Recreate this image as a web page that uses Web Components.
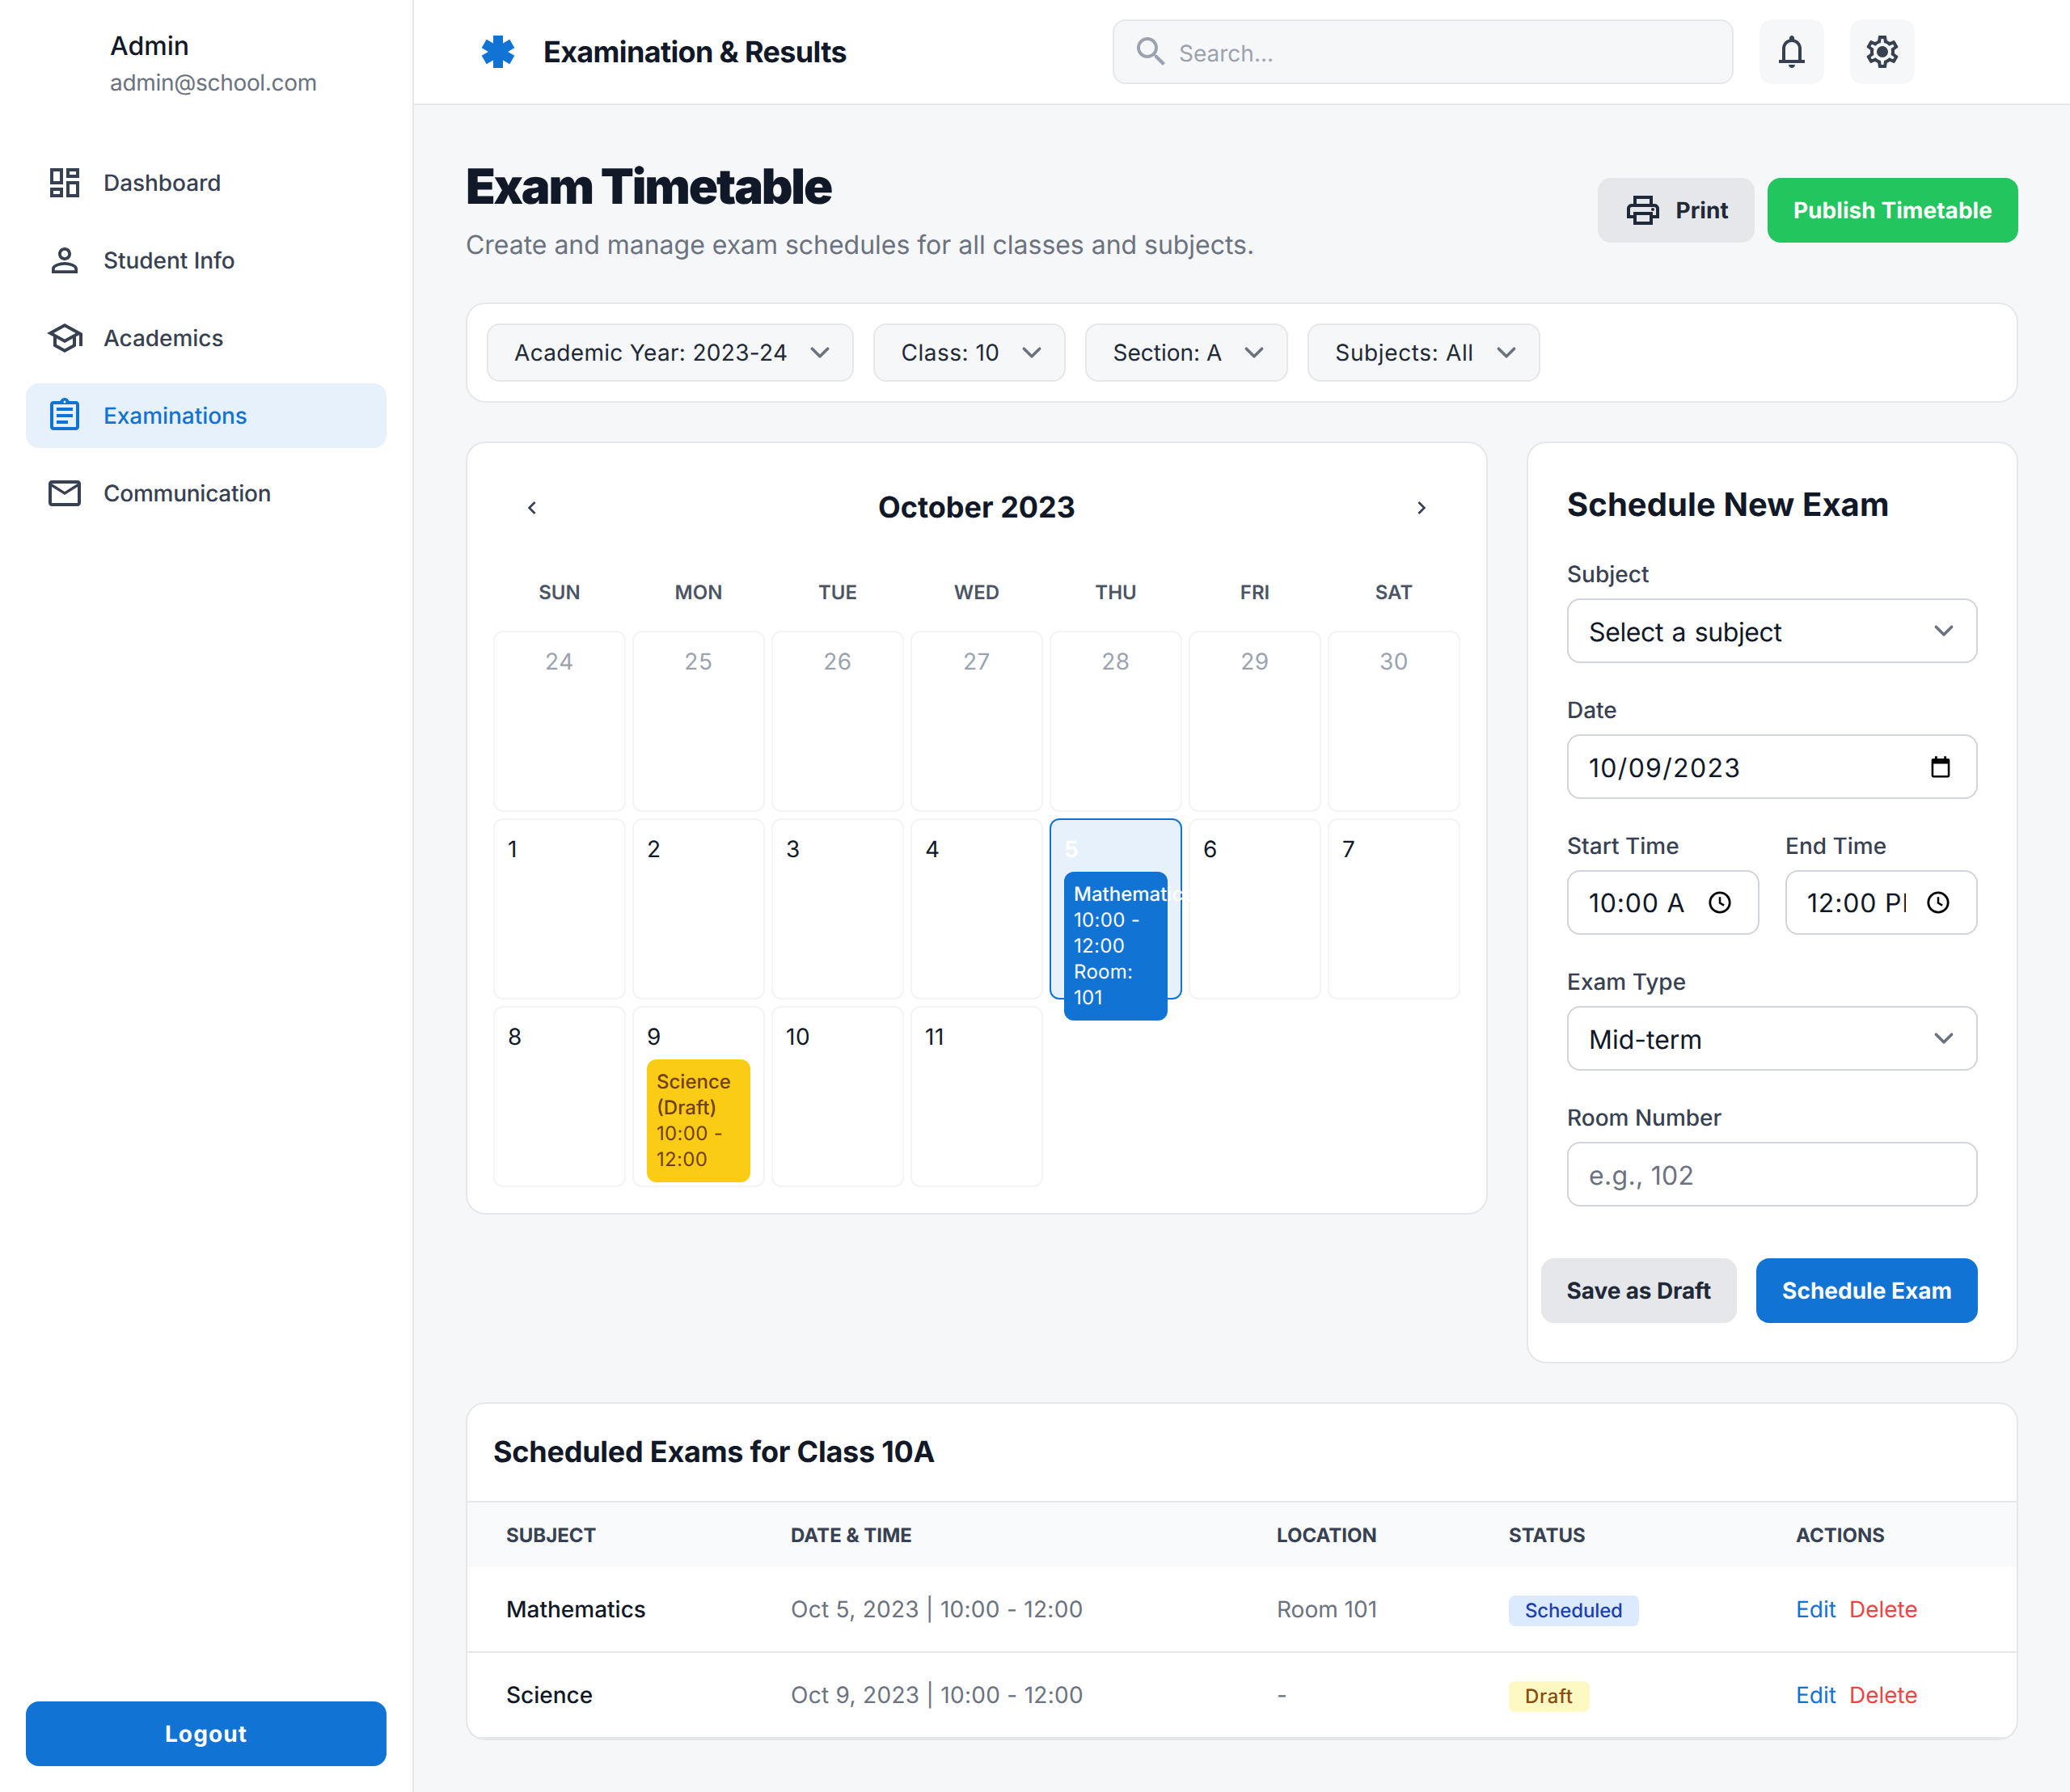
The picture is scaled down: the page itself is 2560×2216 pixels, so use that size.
<!DOCTYPE html>
<html lang="en">
<head>
<meta charset="utf-8">
<title>Exam Timetable</title>
<style>
    html, body { margin: 0; padding: 0; }
    body { background: #f6f7f8; font-family: Inter, "Noto Sans", sans-serif; color: #111827; text-rendering: geometricPrecision; }
</style>
</head>
<body>
<exam-app>
    <app-sidebar slot="sidebar" name="Admin" email="admin@school.com">
        <nav-item icon="dashboard">Dashboard</nav-item>
        <nav-item icon="person">Student Info</nav-item>
        <nav-item icon="school">Academics</nav-item>
        <nav-item icon="assignment" active>Examinations</nav-item>
        <nav-item icon="mail" style="letter-spacing: -0.25px">Communication</nav-item>
        <ui-button slot="footer" kind="primary" wide style="letter-spacing: 1.1px">Logout</ui-button>
    </app-sidebar>

    <app-header slot="header" heading="Examination &amp; Results"></app-header>

    <page-head heading="Exam Timetable" sub="Create and manage exam schedules for all classes and subjects.">
        <ui-button kind="muted" icon="print" style="letter-spacing: 0.1px">Print</ui-button>
        <ui-button kind="success" style="letter-spacing: 0.05px">Publish Timetable</ui-button>
    </page-head>

    <filter-bar>
        <filter-select style="letter-spacing: 0.32px">Academic Year: 2023-24</filter-select>
        <filter-select style="letter-spacing: 0.5px">Class: 10</filter-select>
        <filter-select>Section: A</filter-select>
        <filter-select style="letter-spacing: 0.63px">Subjects: All</filter-select>
    </filter-bar>

    <split-row>
        <month-calendar heading="October 2023">
            <cal-cell day="24" muted></cal-cell>
            <cal-cell day="25" muted></cal-cell>
            <cal-cell day="26" muted></cal-cell>
            <cal-cell day="27" muted></cal-cell>
            <cal-cell day="28" muted></cal-cell>
            <cal-cell day="29" muted></cal-cell>
            <cal-cell day="30" muted></cal-cell>
            <cal-cell day="1"></cal-cell>
            <cal-cell day="2"></cal-cell>
            <cal-cell day="3"></cal-cell>
            <cal-cell day="4"></cal-cell>
            <cal-cell day="5" selected>
                <cal-event subject="Mathematics">10:00 - 12:00<br>Room: 101</cal-event>
            </cal-cell>
            <cal-cell day="6"></cal-cell>
            <cal-cell day="7"></cal-cell>
            <cal-cell day="8"></cal-cell>
            <cal-cell day="9">
                <cal-event subject="Science (Draft)" draft>10:00 - 12:00</cal-event>
            </cal-cell>
            <cal-cell day="10"></cal-cell>
            <cal-cell day="11"></cal-cell>
        </month-calendar>

        <exam-form heading="Schedule New Exam">
            <form-field label="Subject"><form-control trail="chevron" style="word-spacing: 2px; letter-spacing: -0.4px">Select a subject</form-control></form-field>
            <form-field label="Date"><form-control trail="calendar" style="letter-spacing: 1.3px">10/09/2023</form-control></form-field>
            <field-pair>
                <form-field label="Start Time"><form-control trail="clock" clip style="letter-spacing: 0.8px">10:00 AM</form-control></form-field>
                <form-field label="End Time"><form-control trail="clock" clip style="letter-spacing: 0.8px">12:00 PM</form-control></form-field>
            </field-pair>
            <form-field label="Exam Type"><form-control trail="chevron">Mid-term</form-control></form-field>
            <form-field label="Room Number"><form-control placeholder style="letter-spacing: 0.3px">e.g., 102</form-control></form-field>
            <ui-button slot="actions" kind="muted" style="letter-spacing: -0.12px">Save as Draft</ui-button>
            <ui-button slot="actions" kind="primary">Schedule Exam</ui-button>
        </exam-form>
    </split-row>

    <exams-table heading="Scheduled Exams for Class 10A"></exams-table>
</exam-app>

<script>
const ICONS = {
    dashboard: `<path d="M19 5v2h-4V5h4M9 5v6H5V5h4m10 8v6h-4v-6h4M9 17v2H5v-2h4M21 3h-8v6h8V3zM11 3H3v10h8V3zm10 8h-8v10h8V11zm-10 4H3v6h8v-6z"/>`,
    person: `<path d="M12 5.9c1.16 0 2.1.94 2.1 2.1s-.94 2.1-2.1 2.1S9.9 9.16 9.9 8s.94-2.1 2.1-2.1m0 9c2.97 0 6.1 1.46 6.1 2.1v1.1H5.9V17c0-.64 3.13-2.1 6.1-2.1M12 4C9.79 4 8 5.79 8 8s1.79 4 4 4 4-1.79 4-4-1.79-4-4-4zm0 9c-2.67 0-8 1.34-8 4v3h16v-3c0-2.66-5.33-4-8-4z"/>`,
    school: `<path d="M12 3L1 9l4 2.18v6L12 21l7-3.82v-6l2-1.09V17h2V9L12 3zm6.82 6L12 12.72 5.18 9 12 5.28 18.82 9zM17 15.99l-5 2.73-5-2.73v-3.72L12 15l5-2.73v3.72z"/>`,
    assignment: `<path fill-rule="evenodd" d="M19 3h-4.18C14.4 1.84 13.3 1 12 1s-2.4.84-2.82 2H5c-1.1 0-2 .9-2 2v14c0 1.1.9 2 2 2h14c1.1 0 2-.9 2-2V5c0-1.1-.9-2-2-2zm-7-.25c.41 0 .75.34.75.75s-.34.75-.75.75-.75-.34-.75-.75.34-.75.75-.75zM19 19H5V5h14v14zM7 15h7v2H7zm0-4h10v2H7zm0-4h10v2H7z"/>`,
    mail: `<path d="M22 6c0-1.1-.9-2-2-2H4c-1.1 0-2 .9-2 2v12c0 1.1.9 2 2 2h16c1.1 0 2-.9 2-2V6zm-2 0l-8 5-8-5h16zm0 12H4V8l8 5 8-5v10z"/>`,
    star: `<rect x="9" y="2" width="6" height="20"/><rect x="9" y="2" width="6" height="20" transform="rotate(60 12 12)"/><rect x="9" y="2" width="6" height="20" transform="rotate(-60 12 12)"/>`,
    search: `<path d="M15.5 14h-.79l-.28-.27C15.41 12.59 16 11.11 16 9.5 16 5.91 13.09 3 9.5 3S3 5.91 3 9.5 5.91 16 9.5 16c1.61 0 3.09-.59 4.23-1.57l.27.28v.79l5 4.99L20.49 19l-4.99-5zm-6 0C7.01 14 5 11.99 5 9.5S7.01 5 9.5 5 14 7.01 14 9.5 11.99 14 9.5 14z"/>`,
    bell: `<path d="M4 19v-2h2v-7c0-1.38.42-2.61 1.25-3.68S9.17 4.56 10.5 4.2v-.7c0-.42.15-.77.44-1.06S11.58 2 12 2s.77.15 1.06.44.44.65.44 1.06v.7c1.33.36 2.42 1.05 3.25 2.12S18 8.62 18 10v7h2v2H4zm8 3c-.55 0-1.02-.2-1.41-.59S10 20.55 10 20h4c0 .55-.2 1.02-.59 1.41S12.55 22 12 22zM8 17h8v-7c0-1.1-.39-2.04-1.18-2.83S13.1 6 12 6s-2.04.39-2.82 1.18S8 8.9 8 10v7z"/>`,
    gear: `<path d="M19.43 12.98c.04-.32.07-.64.07-.98 0-.34-.03-.66-.07-.98l2.11-1.65c.19-.15.24-.42.12-.64l-2-3.46c-.09-.16-.26-.25-.44-.25-.06 0-.12.01-.17.03l-2.49 1c-.52-.4-1.08-.73-1.69-.98l-.38-2.65C14.46 2.18 14.25 2 14 2h-4c-.25 0-.46.18-.49.42l-.38 2.65c-.61.25-1.17.59-1.69.98l-2.49-1c-.06-.02-.12-.03-.18-.03-.17 0-.34.09-.43.25l-2 3.46c-.13.22-.07.49.12.64l2.11 1.65c-.04.32-.07.65-.07.98 0 .33.03.66.07.98l-2.11 1.65c-.19.15-.24.42-.12.64l2 3.46c.09.16.26.25.44.25.06 0 .12-.01.17-.03l2.49-1c.52.4 1.08.73 1.69.98l.38 2.65c.03.24.24.42.49.42h4c.25 0 .46-.18.49-.42l.38-2.65c.61-.25 1.17-.59 1.69-.98l2.49 1c.06.02.12.03.18.03.17 0 .34-.09.43-.25l2-3.46c.12-.22.07-.49-.12-.64l-2.11-1.65zm-1.98-1.71c.04.31.05.52.05.73 0 .21-.02.43-.05.73l-.14 1.13.89.7 1.08.84-.7 1.21-1.27-.51-1.04-.42-.9.68c-.43.32-.84.56-1.25.73l-1.06.43-.16 1.13-.2 1.35h-1.4l-.19-1.35-.16-1.13-1.06-.43c-.43-.18-.83-.41-1.23-.71l-.91-.7-1.06.43-1.27.51-.7-1.21 1.08-.84.89-.7-.14-1.13c-.03-.31-.05-.54-.05-.74s.02-.43.05-.73l.14-1.13-.89-.7-1.08-.84.7-1.21 1.27.51 1.04.42.9-.68c.43-.32.84-.56 1.25-.73l1.06-.43.16-1.13.2-1.35h1.39l.19 1.35.16 1.13 1.06.43c.43.18.83.41 1.23.71l.91.7 1.06-.43 1.27-.51.7 1.21-1.07.85-.89.7.14 1.13z"/><circle cx="12" cy="12" r="3.5"/>`,
    print: `<path d="M19 8h-1V3H6v5H5c-1.66 0-3 1.34-3 3v6h4v4h12v-4h4v-6c0-1.66-1.34-3-3-3zM8 5h8v3H8V5zm8 12v2H8v-4h8v2zm2-2v-2H6v2H4v-4c0-.55.45-1 1-1h14c.55 0 1 .45 1 1v4h-2z"/><circle cx="18" cy="11.5" r="1"/>`,
    left: `<path d="M15.41 7.41L14 6l-6 6 6 6 1.41-1.41L10.83 12z"/>`,
    right: `<path d="M8.59 16.59L10 18l6-6-6-6-1.41 1.41L13.17 12z"/>`,
    chevron: `<path d="M7.2 9.6l4.8 4.8 4.8-4.8" fill="none" stroke="#6b7280" stroke-width="1.8" stroke-linecap="round" stroke-linejoin="round"/>`,
    calendar: `<path d="M7 3h2v2h6V3h2v2h1.5c.83 0 1.5.67 1.5 1.5V20c0 .83-.67 1.5-1.5 1.5h-13A1.5 1.5 0 0 1 4 20V6.5C4 5.67 4.67 5 5.5 5H7zM5.8 9.5v10.2h12.4V9.5z" fill-rule="evenodd"/>`,
    clock: `<circle cx="12" cy="12" r="8.6" fill="none" stroke="currentColor" stroke-width="2"/><path d="M12 7.2v5.2l3.6 2.2" fill="none" stroke="currentColor" stroke-width="1.8"/>`
}

class UiIcon extends HTMLElement {
    constructor() {
        super()
        const size = this.getAttribute("size") || 48
        this.attachShadow({ mode: "open" }).innerHTML = `
            <style>
                :host { display: block; flex: none; width: ${size}px; height: ${size}px; }
                svg { display: block; width: 100%; height: 100%; fill: currentColor; }
            </style>
            <svg viewBox="0 0 24 24">${ICONS[this.getAttribute("name")]}</svg>`
    }
}
customElements.define("ui-icon", UiIcon)

const appTemplate = document.createElement("template")
appTemplate.innerHTML = `
    <style>
        :host { display: flex; min-height: 2216px; }
        .right { flex: 1; min-width: 0; display: flex; flex-direction: column; }
        main { padding: 64px; display: flex; flex-direction: column; }
    </style>
    <slot name="sidebar"></slot>
    <div class="right">
        <slot name="header"></slot>
        <main><slot></slot></main>
    </div>
`
class ExamApp extends HTMLElement {
    constructor() {
        super()
        this.attachShadow({ mode: "open" }).appendChild(appTemplate.content.cloneNode(true))
    }
}
customElements.define("exam-app", ExamApp)

const sidebarTemplate = document.createElement("template")
sidebarTemplate.innerHTML = `
    <style>
        :host { display: flex; flex-direction: column; flex: none; box-sizing: border-box; width: 512px; padding: 33px 32px 32px; background: #fff; border-right: 2px solid #e5e7eb; }
        .profile { padding-left: 104px; margin-bottom: 64px; }
        .name { font-size: 32px; line-height: 48px; font-weight: 500; color: #111827; }
        .email { font-size: 28px; line-height: 40px; color: #6b7280; margin-top: 1px; letter-spacing: -0.3px; }
        nav { display: flex; flex-direction: column; gap: 16px; flex: 1; }
    </style>
    <div class="profile"><div class="name"></div><div class="email"></div></div>
    <nav><slot></slot></nav>
    <slot name="footer"></slot>
`
class AppSidebar extends HTMLElement {
    constructor() {
        super()
        this.attachShadow({ mode: "open" }).appendChild(sidebarTemplate.content.cloneNode(true))
        this.shadowRoot.querySelector(".name").innerText = this.getAttribute("name")
        this.shadowRoot.querySelector(".email").innerText = this.getAttribute("email")
    }
}
customElements.define("app-sidebar", AppSidebar)

class NavItem extends HTMLElement {
    constructor() {
        super()
        this.attachShadow({ mode: "open" }).innerHTML = `
            <style>
                :host { display: flex; align-items: center; gap: 24px; height: 80px; padding: 0 24px; border-radius: 16px; font-size: 28px; font-weight: 500; color: #374151; letter-spacing: -0.05px; }
                :host([active]) { background: #e7f1fb; color: #1173d4; }
            </style>
            <ui-icon name="${this.getAttribute("icon")}"></ui-icon>
            <slot></slot>`
    }
}
customElements.define("nav-item", NavItem)

class UiButton extends HTMLElement {
    constructor() {
        super()
        const icon = this.getAttribute("icon")
        this.attachShadow({ mode: "open" }).innerHTML = `
            <style>
                :host { display: inline-flex; flex: none; align-items: center; justify-content: center; gap: 16px; box-sizing: border-box; height: 80px; padding: 0 32px; border-radius: 16px; font-size: 28px; font-weight: 700; white-space: nowrap; }
                :host([kind=primary]) { background: #1173d4; color: #fff; }
                :host([kind=success]) { background: #22c55e; color: #fff; }
                :host([kind=muted]) { background: #e5e7eb; color: #1f2937; }
                :host([wide]) { display: flex; }
            </style>
            ${icon ? `<ui-icon name="${icon}"></ui-icon>` : ""}
            <slot></slot>`
    }
}
customElements.define("ui-button", UiButton)

const headerTemplate = document.createElement("template")
headerTemplate.innerHTML = `
    <style>
        :host { display: flex; align-items: center; justify-content: space-between; box-sizing: border-box; height: 130px; padding: 0 192px 0 80px; background: #fff; border-bottom: 2px solid #e5e7eb; }
        .brand { display: flex; align-items: center; gap: 32px; color: #1173d4; }
        h1 { margin: 0; font-size: 36px; line-height: 56px; font-weight: 700; letter-spacing: -0.66px; color: #111827; }
        .tools { display: flex; gap: 32px; }
        .search { display: flex; align-items: center; gap: 10px; box-sizing: border-box; width: 768px; height: 80px; padding: 0 22px; background: #f6f7f8; border: 2px solid #e5e7eb; border-radius: 16px; color: #9ca3af; font-size: 28px; }
        .search span { padding-top: 3px; }
        .square { display: flex; align-items: center; justify-content: center; width: 80px; height: 80px; border-radius: 16px; background: #f6f7f8; color: #374151; }
    </style>
    <div class="brand"><ui-icon name="star"></ui-icon><h1></h1></div>
    <div class="tools">
        <div class="search"><ui-icon name="search"></ui-icon><span>Search...</span></div>
        <div class="square"><ui-icon name="bell"></ui-icon></div>
        <div class="square"><ui-icon name="gear"></ui-icon></div>
    </div>
`
class AppHeader extends HTMLElement {
    constructor() {
        super()
        this.attachShadow({ mode: "open" }).appendChild(headerTemplate.content.cloneNode(true))
        this.shadowRoot.querySelector("h1").textContent = this.getAttribute("heading")
    }
}
customElements.define("app-header", AppHeader)

const pageHeadTemplate = document.createElement("template")
pageHeadTemplate.innerHTML = `
    <style>
        :host { display: flex; align-items: center; justify-content: space-between; margin-bottom: 48px; }
        h2 { margin: 0; padding-top: 2px; font-size: 60px; line-height: 70px; font-weight: 900; letter-spacing: -2.15px; color: #111827; }
        p { margin: 13px 0 -1px; font-size: 32px; line-height: 48px; letter-spacing: -0.03px; color: #6b7280; }
        .actions { display: flex; gap: 16px; }
    </style>
    <div><h2></h2><p></p></div>
    <div class="actions"><slot></slot></div>
`
class PageHead extends HTMLElement {
    constructor() {
        super()
        this.attachShadow({ mode: "open" }).appendChild(pageHeadTemplate.content.cloneNode(true))
        this.shadowRoot.querySelector("h2").textContent = this.getAttribute("heading")
        this.shadowRoot.querySelector("p").textContent = this.getAttribute("sub")
    }
}
customElements.define("page-head", PageHead)

class FilterBar extends HTMLElement {
    constructor() {
        super()
        this.attachShadow({ mode: "open" }).innerHTML = `
            <style>
                :host { display: flex; gap: 24px; padding: 24px; margin-bottom: 48px; background: #fff; border: 2px solid #e5e7eb; border-radius: 24px; }
            </style>
            <slot></slot>`
    }
}
customElements.define("filter-bar", FilterBar)

class FilterSelect extends HTMLElement {
    constructor() {
        super()
        this.attachShadow({ mode: "open" }).innerHTML = `
            <style>
                :host { display: flex; align-items: center; box-sizing: border-box; height: 72px; padding: 0 16px 0 32px; gap: 16px; background: #f6f7f8; border: 2px solid #e5e7eb; border-radius: 16px; font-size: 28px; color: #1f2937; white-space: nowrap; }
            </style>
            <slot></slot>
            <ui-icon name="chevron"></ui-icon>`
    }
}
customElements.define("filter-select", FilterSelect)

class SplitRow extends HTMLElement {
    constructor() {
        super()
        this.attachShadow({ mode: "open" }).innerHTML = `
            <style>
                :host { display: grid; grid-template-columns: 1264px 608px; gap: 48px; align-items: start; margin-bottom: 48px; }
            </style>
            <slot></slot>`
    }
}
customElements.define("split-row", SplitRow)

const calendarTemplate = document.createElement("template")
calendarTemplate.innerHTML = `
    <style>
        :host { display: block; box-sizing: border-box; padding: 48px 32px 32px; background: #fff; border: 2px solid #e5e7eb; border-radius: 24px; }
        .top { display: flex; align-items: center; justify-content: space-between; padding: 0 16px; margin-bottom: 32px; }
        .nav { display: flex; align-items: center; justify-content: center; width: 64px; height: 64px; color: #374151; }
        .top h3 { margin: -2px 0 0; font-size: 36px; line-height: 56px; font-weight: 700; color: #111827; }
        .days, .grid { display: grid; grid-template-columns: repeat(7, 164px); column-gap: 8px; }
        .days { height: 80px; margin-bottom: 8px; align-items: center; text-align: center; font-size: 24px; font-weight: 600; color: #4b5563; }
        .grid { row-gap: 8px; grid-auto-rows: 224px; }
    </style>
    <div class="top">
        <div class="nav"><ui-icon name="left" size="32"></ui-icon></div>
        <h3></h3>
        <div class="nav"><ui-icon name="right" size="32"></ui-icon></div>
    </div>
    <div class="days"><div>SUN</div><div>MON</div><div>TUE</div><div>WED</div><div>THU</div><div>FRI</div><div>SAT</div></div>
    <div class="grid"><slot></slot></div>
`
class MonthCalendar extends HTMLElement {
    constructor() {
        super()
        this.attachShadow({ mode: "open" }).appendChild(calendarTemplate.content.cloneNode(true))
        this.shadowRoot.querySelector("h3").textContent = this.getAttribute("heading")
    }
}
customElements.define("month-calendar", MonthCalendar)

class CalCell extends HTMLElement {
    constructor() {
        super()
        this.attachShadow({ mode: "open" }).innerHTML = `
            <style>
                :host { display: block; box-sizing: border-box; padding: 16px; border: 2px solid #f3f4f6; border-radius: 12px; font-size: 28px; line-height: 40px; color: #111827; }
                .num { letter-spacing: 0.6px; }
                :host([muted]) { color: #9ca3af; text-align: center; }
                :host([selected]) { background: #e7f1fb; border-color: #1173d4; }
                :host([selected]) .num { color: #fff; font-weight: 700; }
            </style>
            <div class="num">${this.getAttribute("day")}</div>
            <slot></slot>`
    }
}
customElements.define("cal-cell", CalCell)

class CalEvent extends HTMLElement {
    constructor() {
        super()
        this.attachShadow({ mode: "open" }).innerHTML = `
            <style>
                :host { display: block; box-sizing: border-box; width: 128px; margin-top: 8px; padding: 12px; border-radius: 12px; background: #1173d4; color: #fff; font-size: 24px; line-height: 32px; letter-spacing: 0.3px; position: relative; }
                :host([draft]) { background: #facc15; color: #713f12; }
                .subject { font-weight: 500; letter-spacing: 0; }
            </style>
            <div class="subject">${this.getAttribute("subject")}</div>
            <slot></slot>`
    }
}
customElements.define("cal-event", CalEvent)

const formTemplate = document.createElement("template")
formTemplate.innerHTML = `
    <style>
        :host { display: block; box-sizing: border-box; padding: 48px; background: #fff; border: 2px solid #e5e7eb; border-radius: 24px; }
        h3 { margin: 0 0 40px; font-size: 40px; line-height: 56px; font-weight: 700; letter-spacing: 0.08px; color: #111827; }
        .fields { display: flex; flex-direction: column; gap: 40px; }
        .actions { display: flex; justify-content: flex-end; gap: 24px; margin-top: 64px; }
    </style>
    <h3></h3>
    <div class="fields"><slot></slot></div>
    <div class="actions"><slot name="actions"></slot></div>
`
class ExamForm extends HTMLElement {
    constructor() {
        super()
        this.attachShadow({ mode: "open" }).appendChild(formTemplate.content.cloneNode(true))
        this.shadowRoot.querySelector("h3").textContent = this.getAttribute("heading")
    }
}
customElements.define("exam-form", ExamForm)

class FieldPair extends HTMLElement {
    constructor() {
        super()
        this.attachShadow({ mode: "open" }).innerHTML = `
            <style>
                :host { display: grid; grid-template-columns: 1fr 1fr; gap: 32px; }
            </style>
            <slot></slot>`
    }
}
customElements.define("field-pair", FieldPair)

class FormField extends HTMLElement {
    constructor() {
        super()
        this.attachShadow({ mode: "open" }).innerHTML = `
            <style>
                :host { display: block; min-width: 0; letter-spacing: 0; }
                label { display: block; margin-bottom: 11px; font-size: 28px; line-height: 37px; font-weight: 500; color: #374151; }
            </style>
            <label>${this.getAttribute("label")}</label>
            <slot></slot>`
    }
}
customElements.define("form-field", FormField)

class FormControl extends HTMLElement {
    constructor() {
        super()
        const trail = this.getAttribute("trail")
        this.attachShadow({ mode: "open" }).innerHTML = `
            <style>
                :host { display: flex; align-items: center; justify-content: space-between; box-sizing: border-box; height: 80px; padding: 0 24px 0 25px; background: #fff; border: 2px solid #d1d5db; border-radius: 16px; font-size: 32px; color: #111827; white-space: nowrap; }
                :host([placeholder]) { color: #6b7280; }
                .text { padding-top: 2px; }
                :host([clip]) .text { display: block; width: 122px; overflow: hidden; padding-top: 0; }
                :host([trail=chevron]) { padding-right: 16px; }
                :host([trail=calendar]) { padding-right: 27px; }
                :host([trail=clock]) { padding-right: 30px; }
                ui-icon { color: #000; }
            </style>
            <span class="text"><slot></slot></span>
            ${trail ? `<ui-icon name="${trail}" size="${trail == "chevron" ? 48 : 34}"></ui-icon>` : ""}`
    }
}
customElements.define("form-control", FormControl)

const tableTemplate = document.createElement("template")
tableTemplate.innerHTML = `
    <style>
        :host { display: block; overflow: hidden; background: #fff; border: 2px solid #e5e7eb; border-radius: 24px; }
        h3 { margin: 0; padding: 31px 32px 33px; font-size: 36px; line-height: 56px; font-weight: 700; letter-spacing: -0.23px; color: #111827; border-bottom: 2px solid #e5e7eb; }
        table { width: 100%; border-collapse: separate; border-spacing: 0; table-layout: fixed; }
        th { height: 80px; padding: 0 0 0 48px; background: #f9fafb; text-align: left; font-size: 24px; font-weight: 700; color: #374151; }
        td { height: 104px; padding: 0 0 0 48px; font-size: 28px; line-height: 40px; color: #6b7280; border-bottom: 2px solid #e5e7eb; }
        td.name { color: #111827; font-weight: 500; }
        td.when { letter-spacing: 0.29px; }
        .pill { display: inline-block; padding: 3px 20px; border-radius: 8px; font-size: 24px; line-height: 32px; font-weight: 500; vertical-align: middle; }
        .blue { background: #dbeafe; color: #1e40af; letter-spacing: -0.15px; }
        .yellow { background: #fef9c3; color: #854d0e; letter-spacing: 0.6px; }
        .edit { color: #1173d4; margin-right: 16px; }
        .del { color: #ef4444; }
    </style>
    <h3></h3>
    <table>
        <colgroup><col style="width:352px"><col style="width:601px"><col style="width:287px"><col style="width:355px"><col></colgroup>
        <thead><tr><th>SUBJECT</th><th>DATE &amp; TIME</th><th>LOCATION</th><th>STATUS</th><th>ACTIONS</th></tr></thead>
        <tbody>
            <tr>
                <td class="name">Mathematics</td><td class="when">Oct 5, 2023 | 10:00 - 12:00</td><td>Room 101</td>
                <td><span class="pill blue">Scheduled</span></td>
                <td><span class="edit">Edit</span><span class="del">Delete</span></td>
            </tr>
            <tr>
                <td class="name">Science</td><td class="when">Oct 9, 2023 | 10:00 - 12:00</td><td>-</td>
                <td><span class="pill yellow">Draft</span></td>
                <td><span class="edit">Edit</span><span class="del">Delete</span></td>
            </tr>
        </tbody>
    </table>
`
class ExamsTable extends HTMLElement {
    constructor() {
        super()
        this.attachShadow({ mode: "open" }).appendChild(tableTemplate.content.cloneNode(true))
        this.shadowRoot.querySelector("h3").textContent = this.getAttribute("heading")
    }
}
customElements.define("exams-table", ExamsTable)
</script>
</body>
</html>
